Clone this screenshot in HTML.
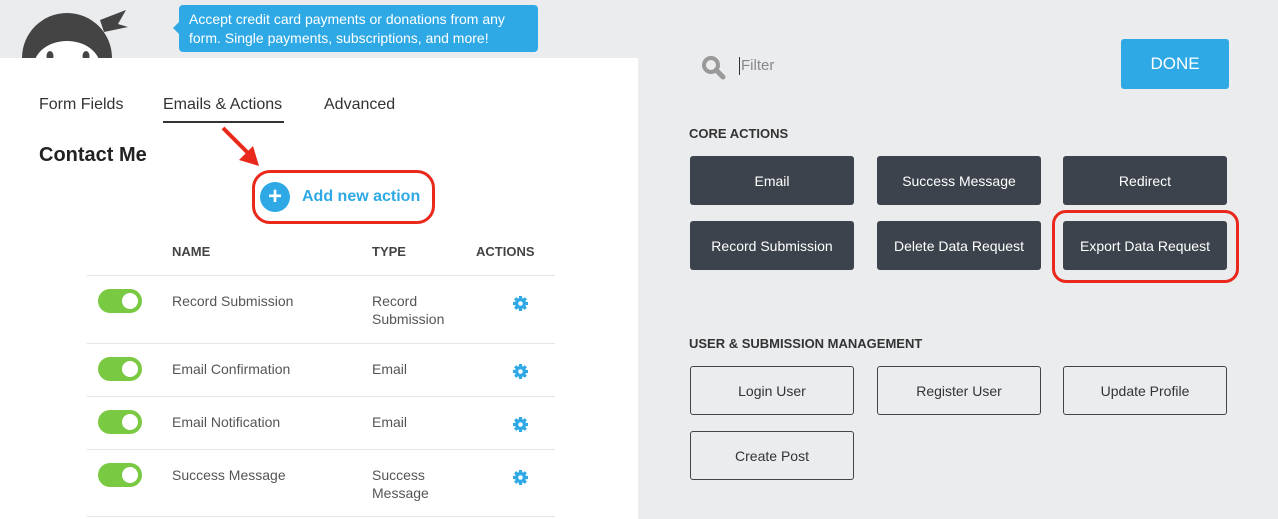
<!DOCTYPE html>
<html><head><style>
*{box-sizing:border-box;margin:0;padding:0}
body{width:1278px;height:519px;background:#ebecee;font-family:"Liberation Sans",sans-serif;position:relative;overflow:hidden;color:#333}
.abs{position:absolute}
.left{left:0;top:58px;width:638px;height:461px;background:#fff}
.tip{left:179px;top:5px;width:359px;height:47px;background:#2ea9e5;border-radius:4px;color:#fff;font-size:14px;line-height:19px;padding:5px 10px}
.tip:before{content:"";position:absolute;left:-6px;top:17px;border:6px solid transparent;border-right-color:#2ea9e5;border-left:0}
.tab{font-size:16px;color:#333;top:96px}
.row{left:87px;width:468px;border-top:1px solid #e5e5e5}
.tog{width:44px;height:24px;border-radius:12px;background:#7ac943;left:98px}
.tog:after{content:"";position:absolute;right:4px;top:4px;width:16px;height:16px;border-radius:50%;background:#fff}
.cell{font-size:14px;color:#555;line-height:18px}
.gear{left:512px;width:17px;height:17px}
.btn{width:164px;height:49px;border-radius:3px;background:#3c434c;color:#fff;font-size:14px;display:flex;align-items:center;justify-content:center}
.obtn{width:164px;height:49px;border-radius:3px;border:1px solid #444;color:#333;font-size:14px;display:flex;align-items:center;justify-content:center}
.hd{font-size:13px;font-weight:bold;color:#333}
</style></head><body>
<div class="abs left"></div>
<svg class="abs" style="left:0;top:0" width="140" height="58" viewBox="0 0 140 58">
<path d="M100 20 L126 10 L118 24 L128 27 L104 32 Z" fill="#444"/>
<circle cx="67" cy="58" r="45" fill="#444"/>
<ellipse cx="67" cy="66" rx="33" ry="25" fill="#fff"/>
<ellipse cx="50" cy="56" rx="3.5" ry="5" fill="#444"/><ellipse cx="86" cy="56" rx="3.5" ry="5" fill="#444"/>
</svg>
<div class="abs tip">Accept credit card payments or donations from any form. Single payments, subscriptions, and more!</div>
<div class="abs tab" style="left:39px">Form Fields</div>
<div class="abs tab" style="left:163px">Emails &amp; Actions</div>
<div class="abs" style="left:163px;top:121px;width:121px;height:2px;background:#333"></div>
<div class="abs tab" style="left:324px">Advanced</div>
<div class="abs" style="left:39px;top:144px;font-size:20px;font-weight:bold;color:#222">Contact Me</div>
<svg class="abs" style="left:215px;top:122px" width="50" height="50"><line x1="8" y1="6" x2="36" y2="34" stroke="#e8291c" stroke-width="4"/><polygon points="44,44 24,38 38,24" fill="#e8291c"/></svg>
<div class="abs" style="left:252px;top:170px;width:183px;height:54px;border:3px solid #e8291c;border-radius:18px"></div>
<div class="abs" style="left:260px;top:182px;width:30px;height:30px;border-radius:50%;background:#2ea9e5;color:#fff;font-size:24px;font-weight:bold;text-align:center;line-height:29px">+</div>
<div class="abs" style="left:302px;top:188px;font-size:16px;font-weight:bold;color:#2ea9e5">Add new action</div>
<div class="abs hd" style="left:172px;top:244px;color:#444">NAME</div>
<div class="abs hd" style="left:372px;top:244px;color:#444">TYPE</div>
<div class="abs hd" style="left:476px;top:244px;color:#444">ACTIONS</div>
<div class="abs row" style="top:275px"></div>
<div class="abs row" style="top:343px"></div>
<div class="abs row" style="top:396px"></div>
<div class="abs row" style="top:449px"></div>
<div class="abs row" style="top:516px"></div>
<div class="abs tog" style="top:289px"></div>
<div class="abs tog" style="top:357px"></div>
<div class="abs tog" style="top:410px"></div>
<div class="abs tog" style="top:463px"></div>
<div class="abs cell" style="left:172px;top:292px">Record Submission</div>
<div class="abs cell" style="left:372px;top:292px">Record<br>Submission</div>
<div class="abs cell" style="left:172px;top:360px">Email Confirmation</div>
<div class="abs cell" style="left:372px;top:360px">Email</div>
<div class="abs cell" style="left:172px;top:413px">Email Notification</div>
<div class="abs cell" style="left:372px;top:413px">Email</div>
<div class="abs cell" style="left:172px;top:466px">Success Message</div>
<div class="abs cell" style="left:372px;top:466px">Success<br>Message</div>
<svg width="0" height="0" style="position:absolute"><defs><g id="g"><circle cx="8.5" cy="8.5" r="5.5" fill="#2ea9e5"/><g stroke="#2ea9e5" stroke-width="3.2"><line x1="8.5" y1="1" x2="8.5" y2="16"/><line x1="1" y1="8.5" x2="16" y2="8.5"/><line x1="3.2" y1="3.2" x2="13.8" y2="13.8"/><line x1="13.8" y1="3.2" x2="3.2" y2="13.8"/></g><circle cx="8.5" cy="8.5" r="2.3" fill="#fff"/></g></defs></svg>
<svg class="abs gear" style="top:295px"><use href="#g"/></svg>
<svg class="abs gear" style="top:363px"><use href="#g"/></svg>
<svg class="abs gear" style="top:416px"><use href="#g"/></svg>
<svg class="abs gear" style="top:469px"><use href="#g"/></svg>
<svg class="abs" style="left:700px;top:54px" width="28" height="28"><circle cx="11" cy="11" r="7" fill="none" stroke="#999" stroke-width="4"/><line x1="16" y1="16" x2="23" y2="23" stroke="#999" stroke-width="5" stroke-linecap="round"/></svg>
<div class="abs" style="left:739px;top:57px;width:1px;height:18px;background:#333"></div>
<div class="abs" style="left:741px;top:57px;font-size:15px;color:#888">Filter</div>
<div class="abs" style="left:1121px;top:39px;width:108px;height:50px;background:#2ea9e5;border-radius:3px;color:#fff;font-size:17px;display:flex;align-items:center;justify-content:center">DONE</div>
<div class="abs hd" style="left:689px;top:126px">CORE ACTIONS</div>
<div class="abs btn" style="left:690px;top:156px">Email</div>
<div class="abs btn" style="left:877px;top:156px">Success Message</div>
<div class="abs btn" style="left:1063px;top:156px">Redirect</div>
<div class="abs btn" style="left:690px;top:221px">Record Submission</div>
<div class="abs btn" style="left:877px;top:221px">Delete Data Request</div>
<div class="abs btn" style="left:1063px;top:221px">Export Data Request</div>
<div class="abs" style="left:1052px;top:210px;width:187px;height:73px;border:3px solid #e8291c;border-radius:14px"></div>
<div class="abs hd" style="left:689px;top:336px">USER &amp; SUBMISSION MANAGEMENT</div>
<div class="abs obtn" style="left:690px;top:366px">Login User</div>
<div class="abs obtn" style="left:877px;top:366px">Register User</div>
<div class="abs obtn" style="left:1063px;top:366px">Update Profile</div>
<div class="abs obtn" style="left:690px;top:431px">Create Post</div>
</body></html>
